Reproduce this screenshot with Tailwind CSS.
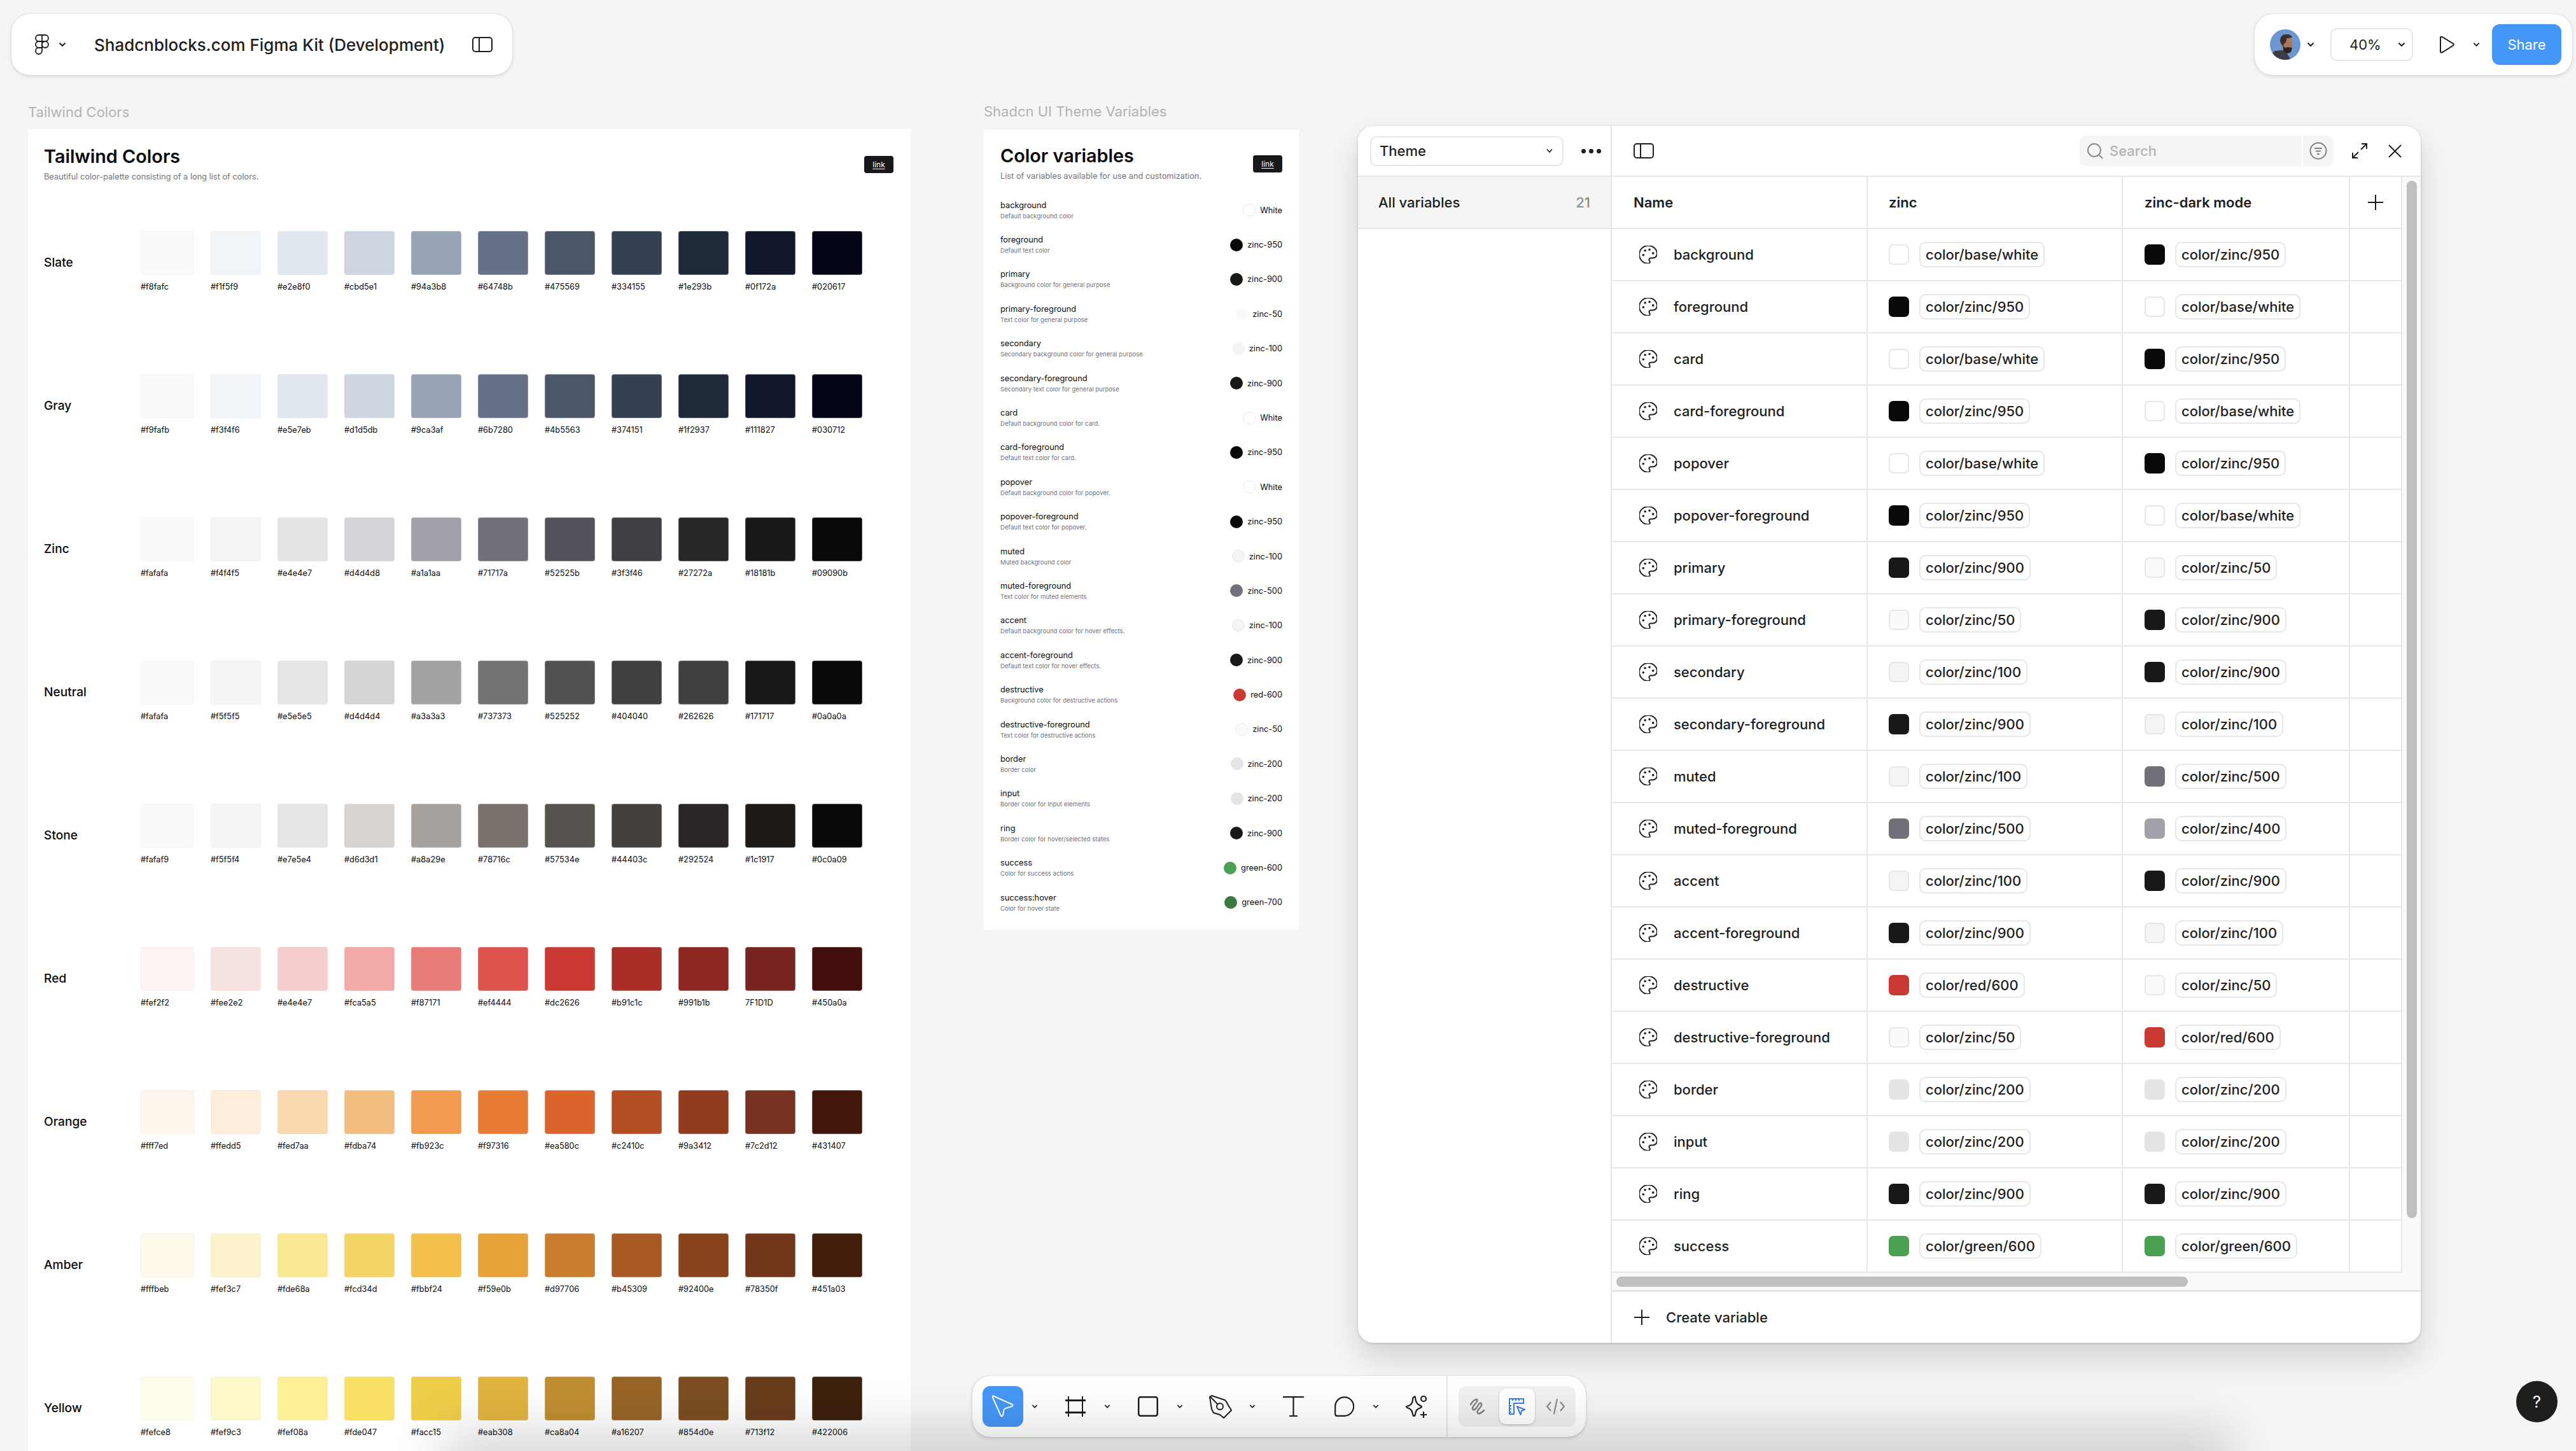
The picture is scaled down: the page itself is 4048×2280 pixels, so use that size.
<!DOCTYPE html>
<html lang="en">
<head>
    <meta charset="UTF-8">
    <meta name="viewport" content="width=device-width, initial-scale=1.0">
    <title>Shadcnblocks.com Figma Kit (Development)</title>
    <script src="https://cdn.jsdelivr.net/npm/@tailwindcss/browser@4"></script>
</head>
<body class="bg-[#f5f5f5]">
<div class="relative w-[4048px] h-[2280px] overflow-hidden bg-[#f5f5f5] font-[Inter,sans-serif] text-[#1e1e1e]">

    <!-- canvas labels -->
    <p class="absolute left-[44px] top-[163px] text-[22px] leading-[26px] text-[#b3b3b3]">Tailwind Colors</p>
    <p class="absolute left-[1546px] top-[162px] text-[22px] leading-[26px] text-[#b3b3b3]">Shadcn UI Theme Variables</p>

    <!-- tailwind colors frame -->
    <div class="absolute left-[44px] top-[203px] w-[1387px] h-[2077px] bg-white pl-[25px] overflow-hidden">
        <div class="relative">
            <h1 class="pt-[26px] text-[28.8px] leading-[34px] font-semibold text-[#09090b]">Tailwind Colors</h1>
            <p class="mt-[7px] text-[12.8px] leading-[16px] text-[#71717a]">Beautiful color-palette consisting of a long list of colors.</p>
            <span class="absolute left-[1289px] top-[42px] w-[46px] h-[27px] rounded-[4px] bg-[#18181b] flex items-center justify-center text-[12px] text-white underline underline-offset-2">link</span>
        </div>
        <div id="palette" class="mt-[77px]"></div>
    </div>

    <!-- theme variables frame -->
    <div class="absolute left-[1546px] top-[204px] w-[495px] h-[1257px] bg-white px-[26px]">
        <div class="flex justify-between h-[99px]">
            <div>
                <h2 class="pt-[24px] text-[28.8px] leading-[34px] font-semibold text-[#09090b]">Color variables</h2>
                <p class="mt-[7px] text-[12.8px] leading-[16px] text-[#71717a]">List of variables available for use and customization.</p>
            </div>
            <span class="mt-[40px] w-[46px] h-[27px] rounded-[4px] bg-[#18181b] flex items-center justify-center text-[12px] text-white underline underline-offset-2">link</span>
        </div>
        <div id="vars"></div>
    </div>

    <!-- variables window -->
    <div class="absolute left-[2134px] top-[198px] w-[1670px] h-[1912px] rounded-[24px] bg-white flex overflow-hidden shadow-[0_1px_4px_rgba(0,0,0,0.18),0_24px_50px_rgba(0,0,0,0.14)] font-[450]">
        <aside class="w-[399px] shrink-0 border-r-2 border-[#e6e6e6]">
            <div class="h-[80px] border-b-2 border-[#e6e6e6] flex items-center pl-[19px]">
                <div class="w-[304px] h-[47px] rounded-[10px] border-2 border-[#e6e6e6] flex items-center justify-between pl-[13px] pr-[14px] text-[22px]">
                    Theme
                    <svg class="w-[12px] h-[8px]" viewBox="0 0 12 8" fill="none" stroke="#1e1e1e" stroke-width="1.6"><path d="M2 1.5l4 4.5 4-4.5"/></svg>
                </div>
                <div class="ml-[28px] flex gap-[5px]">
                    <span class="w-[7px] h-[7px] rounded-full bg-[#1e1e1e]"></span>
                    <span class="w-[7px] h-[7px] rounded-full bg-[#1e1e1e]"></span>
                    <span class="w-[7px] h-[7px] rounded-full bg-[#1e1e1e]"></span>
                </div>
            </div>
            <div class="h-[82px] bg-[#f5f5f5] border-b-2 border-[#e6e6e6] flex items-center justify-between pl-[32px] pr-[32px] text-[22px]">
                <span class="font-medium">All variables</span>
                <span class="text-[#8c8c8c]">21</span>
            </div>
        </aside>
        <main class="flex-1 flex flex-col min-w-0">
            <div class="h-[80px] shrink-0 border-b-2 border-[#e6e6e6] flex items-center pl-[34px]">
                <svg class="w-[32px] h-[24px]" viewBox="0 0 32 24" fill="none" stroke="#1e1e1e" stroke-width="2"><rect x="1" y="1" width="30" height="22" rx="4"/><path d="M11 1v22"/></svg>
                <div class="ml-[669px] w-[399px] h-[48px] rounded-[10px] bg-[#f5f5f5] flex items-center">
                    <svg class="ml-[11px] w-[26px] h-[26px]" viewBox="0 0 26 26" fill="none" stroke="#8c8c8c" stroke-width="2"><circle cx="12" cy="12" r="10"/><path d="M19 19l6 6"/></svg>
                    <span class="ml-[10px] text-[22px] text-[#b3b3b3]">Search</span>
                    <span class="ml-auto w-[2px] h-[48px] bg-white"></span>
                    <span class="w-[48px] flex justify-center">
                        <svg class="w-[28px] h-[28px]" viewBox="0 0 28 28" fill="none" stroke="#808080" stroke-width="2"><circle cx="14" cy="14" r="12.5"/><path d="M8 10h12M10 14.500h8M12 19h4"/></svg>
                    </span>
                </div>
                <svg class="ml-[29px] w-[24px] h-[24px]" viewBox="0 0 24 24" fill="none" stroke="#1e1e1e" stroke-width="2"><path d="M15 1h8v8M23 1l-9 9M9 23H1v-8M1 23l9-9"/></svg>
                <svg class="ml-[33px] w-[21px] h-[21px]" viewBox="0 0 22 22" fill="none" stroke="#1e1e1e" stroke-width="2"><path d="M1 1l20 20M21 1L1 21"/></svg>
            </div>
            <div class="flex">
                <div class="w-[1242px]">
                    <div id="table" class="grid grid-cols-[402px_401px_357px_82px]"></div>
                </div>
                <div class="flex-1 bg-[#fafafa] pl-[7px] pt-[6px]">
                    <div class="w-[16px] h-[1630px] rounded-full bg-[#bfbfbf]"></div>
                </div>
            </div>
            <div class="h-[27px] shrink-0 bg-[#fafafa] pl-[7px] pt-[6px]">
                <div class="w-[898px] h-[16px] rounded-full bg-[#bfbfbf]"></div>
            </div>
            <div class="flex-1 border-t-[3px] border-[#e6e6e6] flex items-center pl-[35px] text-[22px]">
                <svg class="w-[24px] h-[24px]" viewBox="0 0 24 24" fill="none" stroke="#1e1e1e" stroke-width="2"><path d="M12 0v24M0 12h24"/></svg>
                <span class="ml-[26px]">Create variable</span>
            </div>
        </main>
    </div>

    <!-- top left toolbar -->
    <div class="absolute left-[18px] top-[22px] w-[787px] h-[96px] rounded-[28px] bg-white shadow-[0_0_1px_rgba(0,0,0,0.3),0_2px_6px_rgba(0,0,0,0.12)] flex items-center pl-[37px]">
        <svg class="w-[22px] h-[32px]" viewBox="0 0 22 32" fill="none" stroke="#1e1e1e" stroke-width="1.8"><path d="M11 1H6a5 5 0 0 0 0 10h5zM11 1h5a5 5 0 0 1 0 10h-5zM11 11H6a5 5 0 0 0 0 10h5z"/><circle cx="16" cy="16" r="5"/><path d="M6 21h5v5a5 5 0 1 1-5-5z"/></svg>
        <svg class="ml-[15px] w-[12px] h-[8px]" viewBox="0 0 12 8" fill="none" stroke="#1e1e1e" stroke-width="2"><path d="M1.500 1.500L6 6l4.500-4.500"/></svg>
        <span class="ml-[44px] w-[594px] text-[26px] font-medium whitespace-nowrap">Shadcnblocks.com Figma Kit (Development)</span>
        <svg class="w-[32px] h-[24px]" viewBox="0 0 32 24" fill="none" stroke="#1e1e1e" stroke-width="2"><rect x="1" y="1" width="30" height="22" rx="4"/><path d="M11 1v22"/></svg>
    </div>

    <!-- top right toolbar -->
    <div class="absolute left-[3543px] top-[22px] w-[499px] h-[96px] rounded-[28px] bg-white shadow-[0_0_1px_rgba(0,0,0,0.3),0_2px_6px_rgba(0,0,0,0.12)] flex items-center pl-[24px]">
        <svg class="w-[48px] h-[48px] rounded-full" viewBox="0 0 48 48">
            <rect width="48" height="48" fill="#6d97d2"/>
            <path d="M0 40l8-6 10-1 7 2 8 13H0z" fill="#3c3d44"/>
            <path d="M17 14q5-7 13-4 5 2 4 7l2 6-2 1 1 5-3 6-7 1-5-3-1-8q-3-5-2-11z" fill="#a8785c"/>
            <path d="M16 17q1-10 11-9 6 0 8 5l-8 1-3 8h-2l-1 5q-5-5-5-10z" fill="#3a302b"/>
            <path d="M21 26q3 5 6 2l8 1-2 7-6 2-6-4z" fill="#2b2421"/>
        </svg>
        <svg class="ml-[10px] w-[12px] h-[8px]" viewBox="0 0 12 8" fill="none" stroke="#1e1e1e" stroke-width="2"><path d="M1.500 1.500L6 6l4.500-4.500"/></svg>
        <div class="ml-[25px] w-[130px] h-[52px] rounded-[10px] border-2 border-[#e6e6e6] flex items-center justify-between pl-[28px] pr-[10px] text-[22px]">
            40%
            <svg class="w-[12px] h-[8px]" viewBox="0 0 12 8" fill="none" stroke="#1e1e1e" stroke-width="2"><path d="M1.500 1.500L6 6l4.500-4.500"/></svg>
        </div>
        <svg class="ml-[41px] w-[24px] h-[28px]" viewBox="0 0 24 28" fill="none" stroke="#1e1e1e" stroke-width="2"><path d="M2 3q0-2 2.500-1L22 12.500q1.500 1.500 0 3L4.500 26.500Q2 27 2 25z"/></svg>
        <svg class="ml-[29px] w-[11px] h-[8px]" viewBox="0 0 12 8" fill="none" stroke="#1e1e1e" stroke-width="2"><path d="M1.500 1.500L6 6l4.500-4.500"/></svg>
        <span class="ml-[19px] w-[109px] h-[64px] rounded-[12px] bg-[#4597f7] text-white text-[22px] flex items-center justify-center">Share</span>
    </div>

    <!-- bottom toolbar -->
    <div class="absolute left-[1528px] top-[2162px] w-[964px] h-[96px] rounded-[28px] bg-white shadow-[0_0_1px_rgba(0,0,0,0.3),0_2px_6px_rgba(0,0,0,0.14)] flex items-center pl-[16px]">
        <span class="w-[64px] h-[64px] rounded-[12px] bg-[#4597f7] flex items-center justify-center">
            <svg class="w-[36px] h-[36px]" viewBox="0 0 36 36" fill="none" stroke="#fff" stroke-width="2" stroke-linejoin="round"><path d="M3 1.500L33 15q1.500 1.500-1 3l-10 3q-2 .5-2.500 2.500L18 32q-1 2-3 1L2 4q-.5-2 1-2.500z"/></svg>
        </span>
        <svg class="ml-[13px] w-[10px] h-[8px]" viewBox="0 0 12 8" fill="none" stroke="#1e1e1e" stroke-width="2"><path d="M1.500 1.500L6 6l4.500-4.500"/></svg>
        <svg class="ml-[43px] w-[32px] h-[32px]" viewBox="0 0 32 32" fill="none" stroke="#1e1e1e"><path d="M5 0v32M27 0v32" stroke-width="2"/><path d="M0 6.500h32M0 25.500h32" stroke-width="3"/></svg>
        <svg class="ml-[29px] w-[10px] h-[8px]" viewBox="0 0 12 8" fill="none" stroke="#1e1e1e" stroke-width="2"><path d="M1.500 1.500L6 6l4.500-4.500"/></svg>
        <svg class="ml-[43px] w-[32px] h-[32px]" viewBox="0 0 32 32" fill="none" stroke="#1e1e1e" stroke-width="2.500"><rect x="1.250" y="1.250" width="29.500" height="29.500" rx="3"/></svg>
        <svg class="ml-[29px] w-[10px] h-[8px]" viewBox="0 0 12 8" fill="none" stroke="#1e1e1e" stroke-width="2"><path d="M1.500 1.500L6 6l4.500-4.500"/></svg>
        <svg class="ml-[41px] w-[36px] h-[37px]" viewBox="0 0 36 37" fill="none" stroke="#1e1e1e" stroke-width="2" stroke-linejoin="round"><path d="M1 3l3-2 21 7q3 3 5 8l5 8-12 12-6-5-10-3-3-6z"/><circle cx="17" cy="18" r="5"/><path d="M2 3l12 12"/></svg>
        <svg class="ml-[27px] w-[10px] h-[8px]" viewBox="0 0 12 8" fill="none" stroke="#1e1e1e" stroke-width="2"><path d="M1.500 1.500L6 6l4.500-4.500"/></svg>
        <svg class="ml-[43px] w-[33px] h-[32px]" viewBox="0 0 33 32" fill="none" stroke="#1e1e1e" stroke-width="2.200"><path d="M0 1.200h33M16.500 1.200v30M10 31h13"/></svg>
        <svg class="ml-[48px] w-[31px] h-[32px]" viewBox="0 0 31 32" fill="none" stroke="#1e1e1e" stroke-width="2.200"><path d="M1.200 28V16a14.500 14.700 0 1 1 14.500 14.800H4q-2.800 0-2.800-2.800z"/></svg>
        <svg class="ml-[29px] w-[10px] h-[8px]" viewBox="0 0 12 8" fill="none" stroke="#1e1e1e" stroke-width="2"><path d="M1.500 1.500L6 6l4.500-4.500"/></svg>
        <svg class="ml-[40px] w-[36px] h-[37px]" viewBox="0 0 36 37" fill="none" stroke="#1e1e1e" stroke-width="2.200"><path d="M15 3q2-1.500 2 1 .5 8 5 11 3 2 5 3 0 2-4 3-5 2-6 9-.5 3-2 3t-2-3q-1-7-6-9-4-1-4-3 5-1 7-3 3-3 3-9 0-2 2-3z"/><circle cx="30" cy="6" r="4"/><path d="M30 26v10M25 31h10"/></svg>
        <span class="ml-[30px] w-[2px] h-[96px] bg-[#e6e6e6]"></span>
        <div class="ml-[17px] w-[184px] h-[64px] rounded-[12px] bg-[#f0f0f0] flex items-center">
            <svg class="ml-[17px] w-[28px] h-[27px]" viewBox="0 0 28 27" fill="none" stroke="#808080" stroke-width="2.500" stroke-linecap="round"><path d="M2 10q5-8 9-8t-2 7q-6 7-3 9t9-9q3-3 4 0t-5 9q-3 5 0 6t9-5"/></svg>
            <span class="ml-[19px] w-[56px] h-[56px] rounded-[10px] bg-white shadow-[0_1px_3px_rgba(0,0,0,0.25)] flex items-center justify-center">
                <svg class="w-[26px] h-[27px]" viewBox="0 0 26 27" fill="none" stroke="#3a7de8" stroke-width="2"><path d="M1 1h22v7H8v17H1zM6 1v3M11 1v3M16 1v3M1 12h3M1 17h3M1 22h3"/><path d="M13 13l12 5-5 2-1.500 6z" stroke-linejoin="round"/></svg>
            </span>
            <svg class="ml-[18px] w-[29px] h-[26px]" viewBox="0 0 29 26" fill="none" stroke="#808080" stroke-width="2"><path d="M7 6l-6 7 6 7M22 6l6 7-6 7M17 1l-5 24"/></svg>
        </div>
    </div>

    <!-- help -->
    <div class="absolute left-[3954px] top-[2170px] w-[65px] h-[65px] rounded-full bg-[#1e1e1e] text-white text-[26px] flex items-center justify-center">?</div>

    <!-- browser edge shade at the bottom -->
    <div class="absolute left-[750px] top-[2300px] w-[2700px] h-[30px] shadow-[0_0_80px_55px_rgba(0,0,0,0.15)] pointer-events-none"></div>
</div>

<script>
    const rows = [
        ["Slate", "f8fafc f1f5f9 e2e8f0 cbd5e1 94a3b8 64748b 475569 334155 1e293b 0f172a 020617", "f9fafc f1f5f9 e2e8f0 cdd5e0 98a3b6 667189 4b5669 354153 1e2939 10172a 020617"],
        ["Gray", "f9fafb f3f4f6 e5e7eb d1d5db 9ca3af 6b7280 4b5563 374151 1f2937 111827 030712", "f9fafc f1f5f9 e2e8f0 cdd5e0 98a3b6 667189 4b5669 354153 1e2939 10172a 020617"],
        ["Zinc", "fafafa f4f4f5 e4e4e7 d4d4d8 a1a1aa 71717a 52525b 3f3f46 27272a 18181b 09090b", "fafafa f4f4f5 e4e4e7 d4d4d8 a1a1aa 71717a 52525b 3f3f46 27272a 18181b 09090b"],
        ["Neutral", "fafafa f5f5f5 e5e5e5 d4d4d4 a3a3a3 737373 525252 404040 262626 171717 0a0a0a", "fafafa f5f5f5 e5e5e5 d4d4d4 a3a3a3 737373 525252 404040 404040 171717 0a0a0a"],
        ["Stone", "fafaf9 f5f5f4 e7e5e4 d6d3d1 a8a29e 78716c 57534e 44403c 292524 1c1917 0c0a09", "fafaf9 f5f5f4 e7e5e4 d6d3d1 a8a29e 78716c 57534e 44403c 292524 1c1917 0c0a09"],
        ["Red", "fef2f2 fee2e2 e4e4e7 fca5a5 f87171 ef4444 dc2626 b91c1c 991b1b 7F1D1D 450a0a", "fdf3f2 f8e3e3 f5cdcd f2a9a8 e97b76 de534e ca3a33 a92e27 8c2721 782521 420f0c"],
        ["Orange", "fff7ed ffedd5 fed7aa fdba74 fb923c f97316 ea580c c2410c 9a3412 7c2d12 431407", "fdf6ed fdeedb f9d8af f3bd80 f09a52 e87c37 da642c b44e22 933b1f 763120 41170a"],
        ["Amber", "fffbeb fef3c7 fde68a fcd34d fbbf24 f59e0b d97706 b45309 92400e 78350f 451a03", "fef9ea fcf2cc fae792 f5d466 f2c04b e8a23a cb7d2f a95a24 88421c 72371a 411d0a"],
        ["Yellow", "fefce8 fef9c3 fef08a fde047 facc15 eab308 ca8a04 a16207 854d0e 713f12 422006", "fefde9 fdf8ca fdf097 f8e065 f0cd49 e1b33f c08e32 986527 7a4e20 693d1c 3c210d"]
    ];

    document.getElementById("palette").innerHTML = rows.map(([name, labels, fills]) => {
        const shown = fills.split(" ");
        const cells = labels.split(" ").map((hex, i) => `
            <div class="${i === 0 ? "w-[84px]" : "w-[79px]"}">
                <div class="h-[69px] rounded-[4px] border border-[#e5e7eb]/30" style="background:#${shown[i]}"></div>
                <p class="mt-[10px] text-[12.8px] leading-[18px] text-[#09090b] whitespace-nowrap">${hex === "7F1D1D" ? hex : "#" + hex}</p>
            </div>`).join("");
        return `<div class="flex h-[225px]">
            <p class="w-[152px] pt-[37px] text-[19.2px] leading-[24px] font-medium text-[#09090b]">${name}</p>
            <div class="flex gap-[26px]">${cells}</div>
        </div>`;
    }).join("");

    const vars = [
        ["background", "Default background color", "White", "#ffffff", 1],
        ["foreground", "Default text color", "zinc-950", "#09090b", 0],
        ["primary", "Background color for general purpose", "zinc-900", "#18181b", 0],
        ["primary-foreground", "Text color for general purpose", "zinc-50", "#fafafa", 0],
        ["secondary", "Secondary background color for general purpose", "zinc-100", "#f4f4f5", 0],
        ["secondary-foreground", "Secondary text color for general purpose", "zinc-900", "#18181b", 0],
        ["card", "Default background color for card.", "White", "#ffffff", 1],
        ["card-foreground", "Default text color for card.", "zinc-950", "#09090b", 0],
        ["popover", "Default background color for popover.", "White", "#ffffff", 1],
        ["popover-foreground", "Default text color for popover.", "zinc-950", "#09090b", 0],
        ["muted", "Muted background color", "zinc-100", "#f4f4f5", 1],
        ["muted-foreground", "Text color for muted elements", "zinc-500", "#71717a", 0],
        ["accent", "Default background color for hover effects.", "zinc-100", "#f4f4f5", 1],
        ["accent-foreground", "Default text color for hover effects.", "zinc-900", "#18181b", 0],
        ["destructive", "Background color for destructive actions", "red-600", "#ca3a33", 0],
        ["destructive-foreground", "Text color for destructive actions", "zinc-50", "#fafafa", 1],
        ["border", "Border color", "zinc-200", "#e4e4e7", 0],
        ["input", "Border color for Input elements", "zinc-200", "#e4e4e7", 0],
        ["ring", "Border color for hover/selected states", "zinc-900", "#18181b", 0],
        ["success", "Color for success actions", "green-600", "#4aa153", 0],
        ["success:hover", "Color for hover state", "green-700", "#3a7a42", 0]
    ];

    document.getElementById("vars").innerHTML = vars.map(([name, desc, value, color, edge]) => `
        <div class="h-[54.4px] flex items-center justify-between">
            <div>
                <p class="text-[12.8px] leading-[18px] text-[#09090b]">${name}</p>
                <p class="mt-[1px] text-[9.6px] leading-[14px] text-[#71717a]">${desc}</p>
            </div>
            <div class="flex items-center gap-[7px] text-[12.8px] text-[#09090b]">
                <span class="w-[20px] h-[20px] rounded-full ${edge ? "border border-[#e8e8e8]" : ""}" style="background:${color}"></span>
                ${value}
            </div>
        </div>`).join("");

    const swatch = {
        "base/white": "#ffffff", "zinc/950": "#09090b", "zinc/900": "#18181b", "zinc/50": "#fafafa",
        "zinc/100": "#f4f4f5", "zinc/200": "#e4e4e7", "zinc/400": "#a1a1aa", "zinc/500": "#71717a",
        "red/600": "#ca3a33", "green/600": "#4aa153"
    };
    const light = ["base/white", "zinc/50", "zinc/100", "zinc/200"];

    const table = [
        ["background", "base/white", "zinc/950"], ["foreground", "zinc/950", "base/white"],
        ["card", "base/white", "zinc/950"], ["card-foreground", "zinc/950", "base/white"],
        ["popover", "base/white", "zinc/950"], ["popover-foreground", "zinc/950", "base/white"],
        ["primary", "zinc/900", "zinc/50"], ["primary-foreground", "zinc/50", "zinc/900"],
        ["secondary", "zinc/100", "zinc/900"], ["secondary-foreground", "zinc/900", "zinc/100"],
        ["muted", "zinc/100", "zinc/500"], ["muted-foreground", "zinc/500", "zinc/400"],
        ["accent", "zinc/100", "zinc/900"], ["accent-foreground", "zinc/900", "zinc/100"],
        ["destructive", "red/600", "zinc/50"], ["destructive-foreground", "zinc/50", "red/600"],
        ["border", "zinc/200", "zinc/200"], ["input", "zinc/200", "zinc/200"],
        ["ring", "zinc/900", "zinc/900"], ["success", "green/600", "green/600"]
    ];

    const cell = "h-[82px] border-b-2 border-r-2 border-[#e6e6e6] flex items-center text-[22px]";

    const chip = token => `
        <span class="w-[32px] h-[32px] rounded-[7px] ${light.includes(token) ? "border-2 border-[#e6e6e6]" : ""}" style="background:${swatch[token]}"></span>
        <span class="ml-[16px] h-[40px] px-[8px] rounded-[10px] border-2 border-[#e6e6e6] flex items-center whitespace-nowrap">color/${token}</span>`;

    const palette = `<svg class="w-[28px] h-[28px]" viewBox="2 2 20 20" fill="none" stroke="#1e1e1e" stroke-width="1.400" stroke-linecap="round" stroke-linejoin="round"><path d="M12 22a1 1 0 0 1 0-20 10 9 0 0 1 10 9 5 5 0 0 1-5 5h-2.250a1.750 1.750 0 0 0-1.400 2.800l.3.4a1.750 1.750 0 0 1-1.400 2.800z"/><circle cx="13.500" cy="6.500" r=".6" fill="#1e1e1e"/><circle cx="17.500" cy="10.500" r=".6" fill="#1e1e1e"/><circle cx="6.500" cy="12.500" r=".6" fill="#1e1e1e"/><circle cx="8.500" cy="7.500" r=".6" fill="#1e1e1e"/></svg>`;

    document.getElementById("table").innerHTML = `
        <div class="${cell} pl-[34px] font-semibold">Name</div>
        <div class="${cell} pl-[33px] font-semibold">zinc</div>
        <div class="${cell} pl-[34px] font-semibold">zinc-dark mode</div>
        <div class="${cell} justify-center">
            <svg class="w-[24px] h-[24px]" viewBox="0 0 24 24" fill="none" stroke="#1e1e1e" stroke-width="2"><path d="M12 0v24M0 12h24"/></svg>
        </div>` + table.map(([name, a, b]) => `
        <div class="${cell} pl-[43px]">${palette}<span class="ml-[26px]">${name}</span></div>
        <div class="${cell} pl-[33px]">${chip(a)}</div>
        <div class="${cell} pl-[34px]">${chip(b)}</div>
        <div class="${cell}"></div>`).join("");
</script>
</body>
</html>
